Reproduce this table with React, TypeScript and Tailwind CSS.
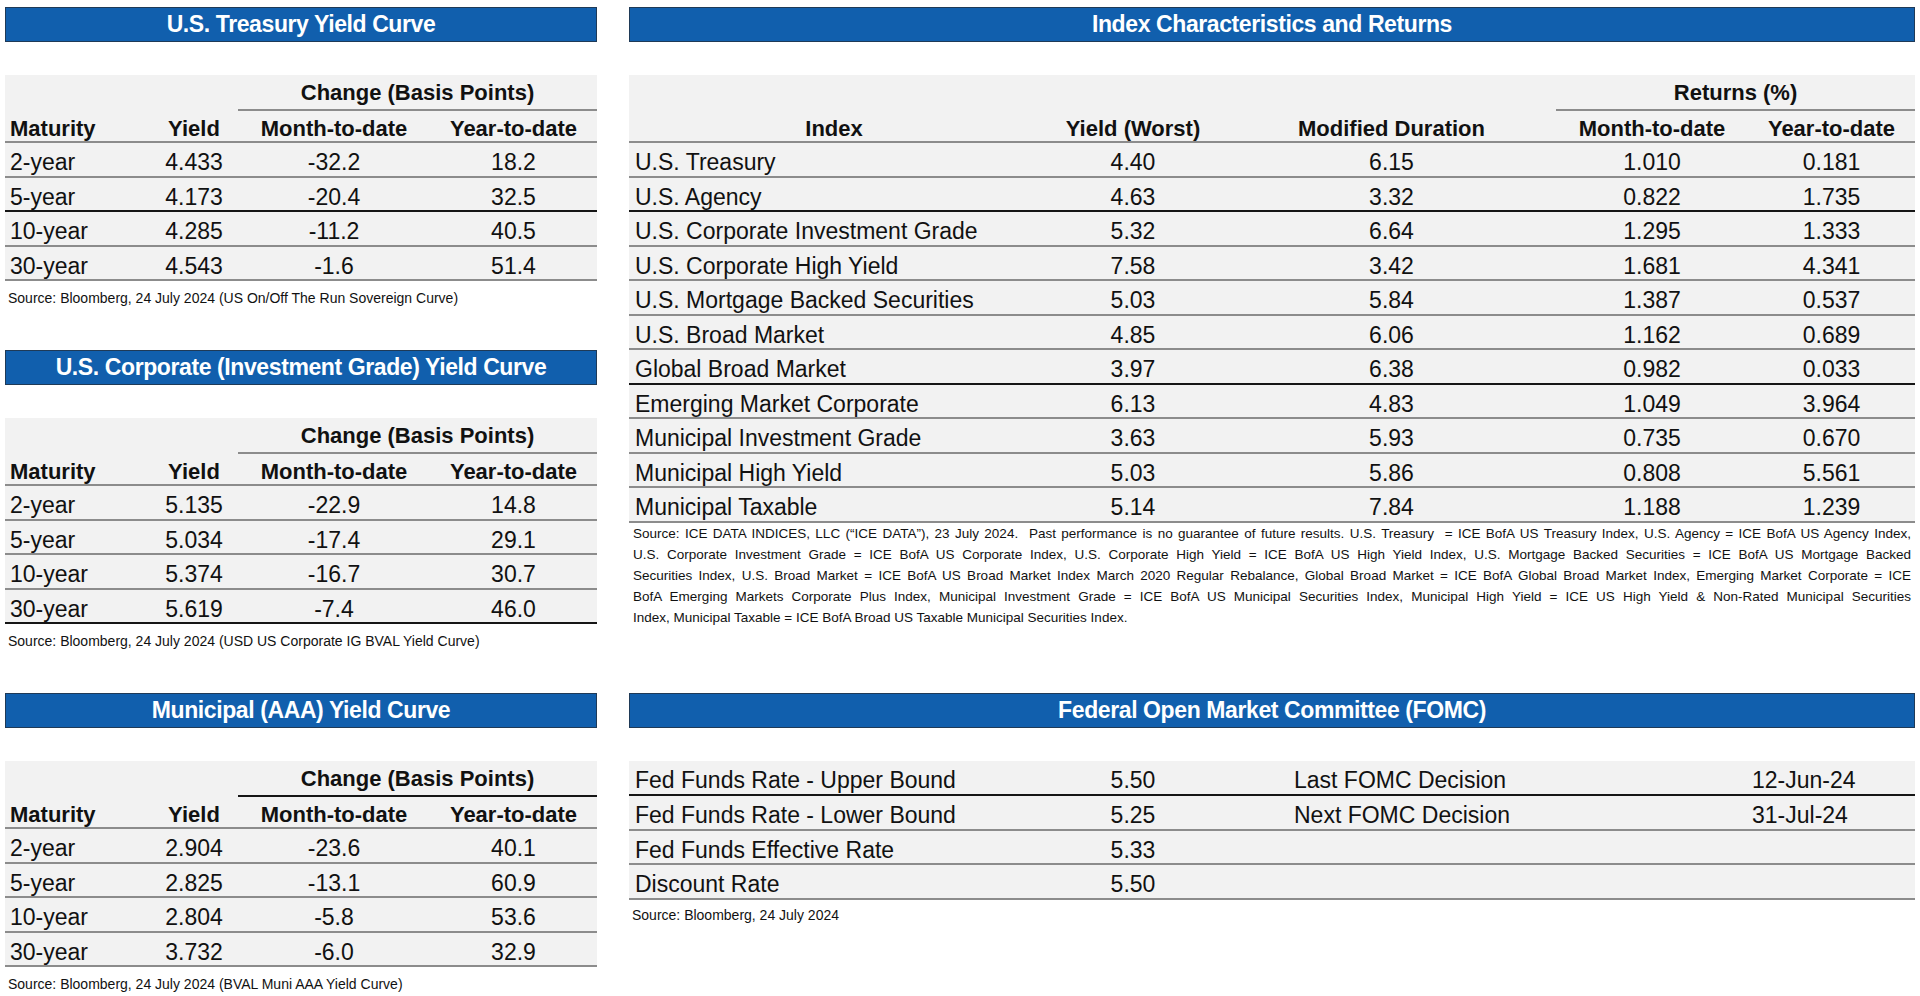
import React from 'react'

type Ln = 'g' | 'k'

const lineCls: Record<Ln, string> = {
  g: 'border-b-2 border-[#8c8c8c]',
  k: 'border-b-2 border-[#161616]',
}

const curves = [
  {
    title: 'U.S. Treasury Yield Curve',
    source: 'Source: Bloomberg, 24 July 2024 (US On/Off The Run Sovereign Curve)',
    change: 'g' as Ln,
    rows: [
      ['2-year', '4.433', '-32.2', '18.2', 'g'],
      ['5-year', '4.173', '-20.4', '32.5', 'k'],
      ['10-year', '4.285', '-11.2', '40.5', 'g'],
      ['30-year', '4.543', '-1.6', '51.4', 'g'],
    ],
  },
  {
    title: 'U.S. Corporate (Investment Grade) Yield Curve',
    source: 'Source: Bloomberg, 24 July 2024 (USD US Corporate IG BVAL Yield Curve)',
    change: 'g' as Ln,
    rows: [
      ['2-year', '5.135', '-22.9', '14.8', 'g'],
      ['5-year', '5.034', '-17.4', '29.1', 'g'],
      ['10-year', '5.374', '-16.7', '30.7', 'g'],
      ['30-year', '5.619', '-7.4', '46.0', 'k'],
    ],
  },
  {
    title: 'Municipal (AAA) Yield Curve',
    source: 'Source: Bloomberg, 24 July 2024 (BVAL Muni AAA Yield Curve)',
    change: 'k' as Ln,
    rows: [
      ['2-year', '2.904', '-23.6', '40.1', 'g'],
      ['5-year', '2.825', '-13.1', '60.9', 'g'],
      ['10-year', '2.804', '-5.8', '53.6', 'g'],
      ['30-year', '3.732', '-6.0', '32.9', 'g'],
    ],
  },
]

const indexRows = [
  ['U.S. Treasury', '4.40', '6.15', '1.010', '0.181', 'g'],
  ['U.S. Agency', '4.63', '3.32', '0.822', '1.735', 'k'],
  ['U.S. Corporate Investment Grade', '5.32', '6.64', '1.295', '1.333', 'g'],
  ['U.S. Corporate High Yield', '7.58', '3.42', '1.681', '4.341', 'g'],
  ['U.S. Mortgage Backed Securities', '5.03', '5.84', '1.387', '0.537', 'g'],
  ['U.S. Broad Market', '4.85', '6.06', '1.162', '0.689', 'g'],
  ['Global Broad Market', '3.97', '6.38', '0.982', '0.033', 'k'],
  ['Emerging Market Corporate', '6.13', '4.83', '1.049', '3.964', 'g'],
  ['Municipal Investment Grade', '3.63', '5.93', '0.735', '0.670', 'g'],
  ['Municipal High Yield', '5.03', '5.86', '0.808', '5.561', 'g'],
  ['Municipal Taxable', '5.14', '7.84', '1.188', '1.239', 'g'],
]

// each line is justified on its own, so the breaks land where the reference has them
const footnote = [
  'Source: ICE DATA INDICES, LLC (\u201cICE DATA\u201d), 23 July 2024.  Past performance is no guarantee of future results. U.S. Treasury  = ICE BofA US Treasury Index, U.S. Agency = ICE BofA US Agency Index,',
  'U.S. Corporate Investment Grade = ICE BofA US Corporate Index, U.S. Corporate High Yield = ICE BofA US High Yield Index, U.S. Mortgage Backed Securities = ICE BofA US Mortgage Backed',
  'Securities Index, U.S. Broad Market = ICE BofA US Broad Market Index March 2020 Regular Rebalance, Global Broad Market = ICE BofA Global Broad Market Index, Emerging Market Corporate = ICE',
  'BofA Emerging Markets Corporate Plus Index, Municipal Investment Grade = ICE BofA US Municipal Securities Index, Municipal High Yield = ICE US High Yield & Non-Rated Municipal Securities',
]

const fomc = [
  ['Fed Funds Rate - Upper Bound', '5.50', 'Last FOMC Decision', '12-Jun-24', 'k'],
  ['Fed Funds Rate - Lower Bound', '5.25', 'Next FOMC Decision', '31-Jul-24', 'g'],
  ['Fed Funds Effective Rate', '5.33', '', '', 'g'],
  ['Discount Rate', '5.50', '', '', 'g'],
]

function TitleBar({ children }: { children: React.ReactNode }) {
  return (
    <div className="h-[35px] flex items-center justify-center bg-[#115fad] border border-[#1f3a57] text-white font-bold text-[23px] tracking-[-0.4px] leading-none whitespace-nowrap">
      {children}
    </div>
  )
}

function CurveSection({ c }: { c: (typeof curves)[number] }) {
  return (
    <div className="h-[343px]">
      <TitleBar>{c.title}</TitleBar>
      <div className="mt-[33px] bg-[#f2f2f2]">
        <div className="grid grid-cols-[145px_88px_192px_167px] h-[35px] font-bold text-[22px]">
          <div className={`col-start-3 col-span-2 flex items-center justify-center pt-[1px] ${lineCls[c.change]}`}>
            Change (Basis Points)
          </div>
        </div>
        <div className={`grid grid-cols-[145px_88px_192px_167px] h-[33px] items-center pt-[2px] font-bold text-[22px] ${lineCls.g}`}>
          <div className="pl-[5px]">Maturity</div>
          <div className="text-center">Yield</div>
          <div className="text-center">Month-to-date</div>
          <div className="text-center">Year-to-date</div>
        </div>
        {c.rows.map((r) => (
          <div key={r[0]} className={`grid grid-cols-[145px_88px_192px_167px] h-[34.5px] items-center pt-[2px] text-[23px] ${lineCls[r[4] as Ln]}`}>
            <div className="pl-[5px]">{r[0]}</div>
            <div className="text-center">{r[1]}</div>
            <div className="text-center">{r[2]}</div>
            <div className="text-center">{r[3]}</div>
          </div>
        ))}
      </div>
      <p className="mt-[7px] pl-[3px] text-[14px] leading-[20px]">{c.source}</p>
    </div>
  )
}

function IndexSection() {
  return (
    <div className="h-[686px]">
      <TitleBar>Index Characteristics and Returns</TitleBar>
      <div className="mt-[33px] bg-[#f2f2f2]">
        <div className="grid grid-cols-[410px_188px_329px_192px_167px] h-[35px] font-bold text-[22px]">
          <div className={`col-start-4 col-span-2 flex items-center justify-center pt-[1px] ${lineCls.g}`}>Returns (%)</div>
        </div>
        <div className={`grid grid-cols-[410px_188px_329px_192px_167px] h-[33px] items-center pt-[2px] font-bold text-[22px] ${lineCls.g}`}>
          <div className="text-center">Index</div>
          <div className="text-center">Yield (Worst)</div>
          <div className="text-center">Modified Duration</div>
          <div className="text-center">Month-to-date</div>
          <div className="text-center">Year-to-date</div>
        </div>
        {indexRows.map((r) => (
          <div key={r[0]} className={`grid grid-cols-[410px_188px_329px_192px_167px] h-[34.5px] items-center pt-[2px] text-[23px] ${lineCls[r[5] as Ln]}`}>
            <div className="pl-[6px] whitespace-nowrap">{r[0]}</div>
            <div className="text-center">{r[1]}</div>
            <div className="text-center">{r[2]}</div>
            <div className="text-center">{r[3]}</div>
            <div className="text-center">{r[4]}</div>
          </div>
        ))}
      </div>
      <div className="px-[4px] text-[13.5px] leading-[21px]">
        {footnote.map((l) => (
          <p key={l} className="text-justify [text-align-last:justify] whitespace-pre [word-spacing:-1.5px]">{l}</p>
        ))}
        <p>Index, Municipal Taxable = ICE BofA Broad US Taxable Municipal Securities Index.</p>
      </div>
    </div>
  )
}

function FomcSection() {
  return (
    <div>
      <TitleBar>Federal Open Market Committee (FOMC)</TitleBar>
      <div className="mt-[33px] bg-[#f2f2f2]">
        {fomc.map((r, i) => (
          <div key={r[0]} className={`grid grid-cols-[410px_188px_329px_192px_167px] items-center pt-[2px] text-[23px] ${i === 0 ? 'h-[35px]' : 'h-[34.5px]'} ${lineCls[r[4] as Ln]}`}>
            <div className="pl-[6px]">{r[0]}</div>
            <div className="text-center">{r[1]}</div>
            <div className="pl-[67px] col-span-2">{r[2]}</div>
            <div className="pl-[4px]">{r[3]}</div>
          </div>
        ))}
      </div>
      <p className="mt-[5px] pl-[3px] text-[14px] leading-[20px]">Source: Bloomberg, 24 July 2024</p>
    </div>
  )
}

export default function App() {
  return (
    <div className="w-[1920px] h-[996px] overflow-hidden bg-white text-[#111] font-['Liberation_Sans',Arial,sans-serif] flex gap-[32px] pl-[5px] pt-[7px]">
      <div className="w-[592px] shrink-0">
        {curves.map((c) => (
          <CurveSection key={c.title} c={c} />
        ))}
      </div>
      <div className="w-[1286px] shrink-0">
        <IndexSection />
        <FomcSection />
      </div>
    </div>
  )
}
